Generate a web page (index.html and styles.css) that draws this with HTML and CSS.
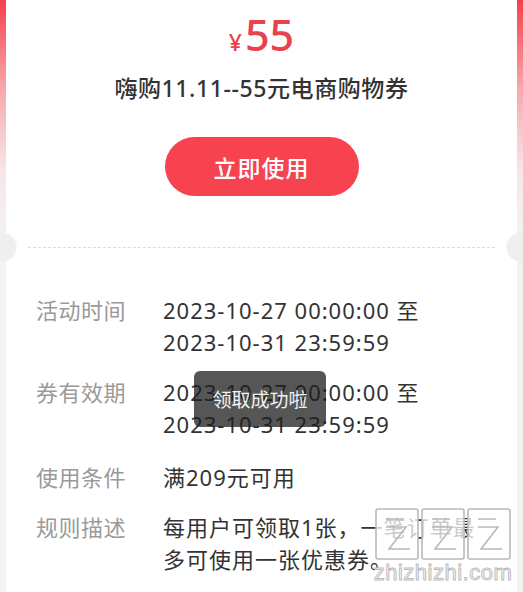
FILE: index.html
```html
<!DOCTYPE html>
<html lang="zh-CN">
<head>
  <meta charset="UTF-8" />
  <meta name="viewport" content="width=device-width, initial-scale=1.0" />
  <title>优惠券详情</title>
  <link rel="stylesheet" href="styles.css">
</head>
<body>
  <div class="card">
    <div class="head">
      <div class="price"><span class="yen">¥</span>55</div>
      <div class="title">嗨购11.11--55元电商购物券</div>
      <button class="use-btn">立即使用</button>
    </div>

    <div class="divider"></div>

    <div class="info">
      <div class="row">
        <div class="label">活动时间</div>
        <div class="value">2023-10-27 00:00:00 至 2023-10-31 23:59:59</div>
      </div>
      <div class="row">
        <div class="label">券有效期</div>
        <div class="value">2023-10-27 00:00:00 至 2023-10-31 23:59:59</div>
      </div>
      <div class="row">
        <div class="label">使用条件</div>
        <div class="value">满209元可用</div>
      </div>
      <div class="row">
        <div class="label">规则描述</div>
        <div class="value">每用户可领取1张，一笔订单最多可使用一张优惠券。</div>
      </div>
    </div>
  </div>

  <div class="toast">领取成功啦</div>

  <div class="watermark">
    <svg width="140" height="56" viewBox="0 0 140 56" fill="none" stroke="#b9b9b9" stroke-width="1.6">
      <rect x="3" y="4" width="42" height="50" rx="2" fill="#fff" fill-opacity="0.75"/>
      <path d="M13 14h18M13 22h20l-17 22h21" />
      <rect x="49" y="4" width="42" height="50" rx="2" fill="#fff" fill-opacity="0.75"/>
      <path d="M59 14h18M59 22h20l-17 22h21" />
      <rect x="95" y="4" width="42" height="50" rx="2" fill="#fff" fill-opacity="0.75"/>
      <path d="M105 14h18M105 22h20l-17 22h21" />
    </svg>
    <div class="wm-text">zhizhizhi.com</div>
  </div>
</body>
</html>
```

FILE: styles.css
```css
:root {
  --rojo: #f6434f;
  --texto: #333333;
  --gris: #9a9a9a;
  --fondo: #f3f3f3;
}

body {
  margin: 0;
  min-height: 592px;
  background: linear-gradient(180deg, #f5404c 0, #f8a9ae 90px, #f6e6e7 170px, var(--fondo) 240px);
  font-family: "Noto Sans", "Noto Sans CJK SC", sans-serif;
  color: var(--texto);
}

.card {
  margin: 0 6px;
  min-height: 592px;
  background: #fff;
}

.head {
  display: flex;
  flex-direction: column;
  align-items: center;
  padding-top: 12px;
}

.price {
  color: #e6434f;
  font-size: 43px;
  line-height: 46px;
  font-weight: 500;
}

.yen {
  font-size: 23px;
  margin-right: 3px;
}

.title {
  margin-top: 8px;
  font-size: 23px;
  line-height: 30px;
  font-weight: 500;
  letter-spacing: 0.6px;
}

.use-btn {
  margin-top: 34px;
  width: 194px;
  height: 59px;
  border: none;
  border-radius: 30px;
  background: var(--rojo);
  color: #fff;
  font-family: inherit;
  font-size: 23px;
  font-weight: 500;
  letter-spacing: 1px;
}

.divider {
  position: relative;
  margin: 46px 0 0;
  height: 12px;
}

.divider::after {
  content: "";
  position: absolute;
  left: 22px;
  right: 22px;
  top: 5px;
  border-top: 1px dashed #dcdcdc;
}

.divider::before {
  content: "";
  position: absolute;
  left: -19px;
  right: -19px;
  top: -10px;
  height: 30px;
  background:
    radial-gradient(circle at 15px 15px, #efefef 14px, transparent 15px) left / 30px 30px no-repeat,
    radial-gradient(circle at 15px 15px, #efefef 14px, transparent 15px) right / 30px 30px no-repeat;
}

.info {
  padding: 40px 0 0 30px;
  display: flex;
  flex-direction: column;
  gap: 18px;
}

.row {
  display: flex;
  font-size: 22px;
  line-height: 32px;
}

.row:nth-child(3) {
  margin-top: 3px;
}

.label {
  width: 127px;
  flex-shrink: 0;
  color: var(--gris);
  letter-spacing: 0.5px;
}

.value {
  width: 322px;
  letter-spacing: 1px;
}

.toast {
  position: absolute;
  left: 194px;
  top: 371px;
  width: 132px;
  height: 56px;
  border-radius: 6px;
  background: rgba(30, 30, 30, 0.75);
  color: #f2f2f2;
  font-size: 19px;
  display: flex;
  align-items: center;
  justify-content: center;
}

.watermark {
  position: absolute;
  left: 373px;
  top: 505px;
  display: flex;
  flex-direction: column;
  align-items: center;
}

.wm-text {
  margin-top: 0;
  font-family: "Liberation Sans", sans-serif;
  font-size: 22px;
  line-height: 24px;
  color: #fff;
  -webkit-text-stroke: 1px #bcbcbc;
  letter-spacing: 0.5px;
}
```
